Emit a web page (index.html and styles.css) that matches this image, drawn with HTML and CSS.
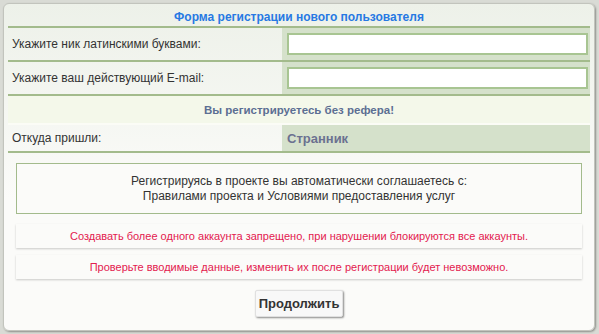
FILE: index.html
```html
<!DOCTYPE html>
<html lang="ru">
<head>
<meta charset="UTF-8">
<title>Регистрация</title>
<link rel="stylesheet" href="styles.css">
</head>
<body>
<div class="wrap">
    <table class="reg">
        <tr>
            <th colspan="2" class="title">Форма регистрации нового пользователя</th>
        </tr>
        <tr>
            <td class="label">Укажите ник латинскими буквами:</td>
            <td class="field"><input type="text" class="inp"></td>
        </tr>
        <tr>
            <td class="label">Укажите ваш действующий E-mail:</td>
            <td class="field"><input type="text" class="inp"></td>
        </tr>
        <tr>
            <td colspan="2" class="note">Вы регистрируетесь без рефера!</td>
        </tr>
        <tr>
            <td class="label short">Откуда пришли:</td>
            <td class="field ref">Странник</td>
        </tr>
    </table>

    <div class="rules">
        Регистрируясь в проекте вы автоматически соглашаетесь с:<br>
        Правилами проекта и Условиями предоставления услуг
    </div>

    <div class="warn">Создавать более одного аккаунта запрещено, при нарушении блокируются все аккаунты.</div>
    <div class="warn">Проверьте вводимые данные, изменить их после регистрации будет невозможно.</div>

    <div class="actions">
        <button type="button" class="btn">Продолжить</button>
    </div>
</div>
</body>
</html>
```

FILE: styles.css
```css
body { margin: 0; background: #d9dbd5;
    font-family: "Liberation Sans", Arial, sans-serif;
    color: #333;
}
.wrap { margin: 3px 4px 3px 3px; height: 328px;
    box-sizing: border-box; padding: 4px 4px 0 4px;
    background: linear-gradient(#edf1e9, #fbfbf9 60%);
    border: 1px solid #c2c4bd; border-radius: 6px;
    box-shadow: 1px 1px 2px rgba(0,0,0,0.35);
}
.reg { width: 100%; border-collapse: collapse;
    font-size: 12px;
}
.reg td, .reg th { padding: 0; border-bottom: 2px solid #a3bb8c; }
.title { height: 18px; color: #2779e3; font-size: 12px;
    font-weight: bold; text-align: center;
}
.label { width: 270px; padding-left: 4px !important;
    height: 32px;
}
.label.short { height: 26px; }
.field { background: #d5e1cb; padding: 0 2px 0 5px !important; }
.inp { display: block; width: 100%; box-sizing: border-box;
    height: 22px; border: 2px solid #a8c592; background: #fff;
    margin: 0;
}
.note { height: 27px; text-align: center; background: #f4f8ea;
    color: #5c6f93; font-size: 11.5px; font-weight: bold;
    border-bottom: 2px solid #fbfcf6 !important;
}
.ref { color: #6b7190; font-weight: bold; font-size: 13px; }
.rules { margin: 10px 8px 0 8px; padding: 10px 10px 9px;
    border: 1px solid #a3bb8c; background: #fbfbf9;
    text-align: center; font-size: 12px; line-height: 15px;
}
.warn { margin: 10px 8px 0 8px; height: 24px; line-height: 24px;
    background: #fbfbf9; text-align: center; font-size: 11px;
    color: #e3204f; box-shadow: 0 1px 2px rgba(0,0,0,0.2);
}
.warn + .warn { margin-top: 7px; }
.actions { text-align: center; margin-top: 11px; }
.btn { font-family: inherit; font-size: 13px; font-weight: bold;
    color: #333; background: #f8f8f8; height: 27px; padding: 0 3px;
    border: 1px solid #e0e0e0; border-radius: 2px;
    box-shadow: 1px 1px 2px rgba(0,0,0,0.45);
}
```
